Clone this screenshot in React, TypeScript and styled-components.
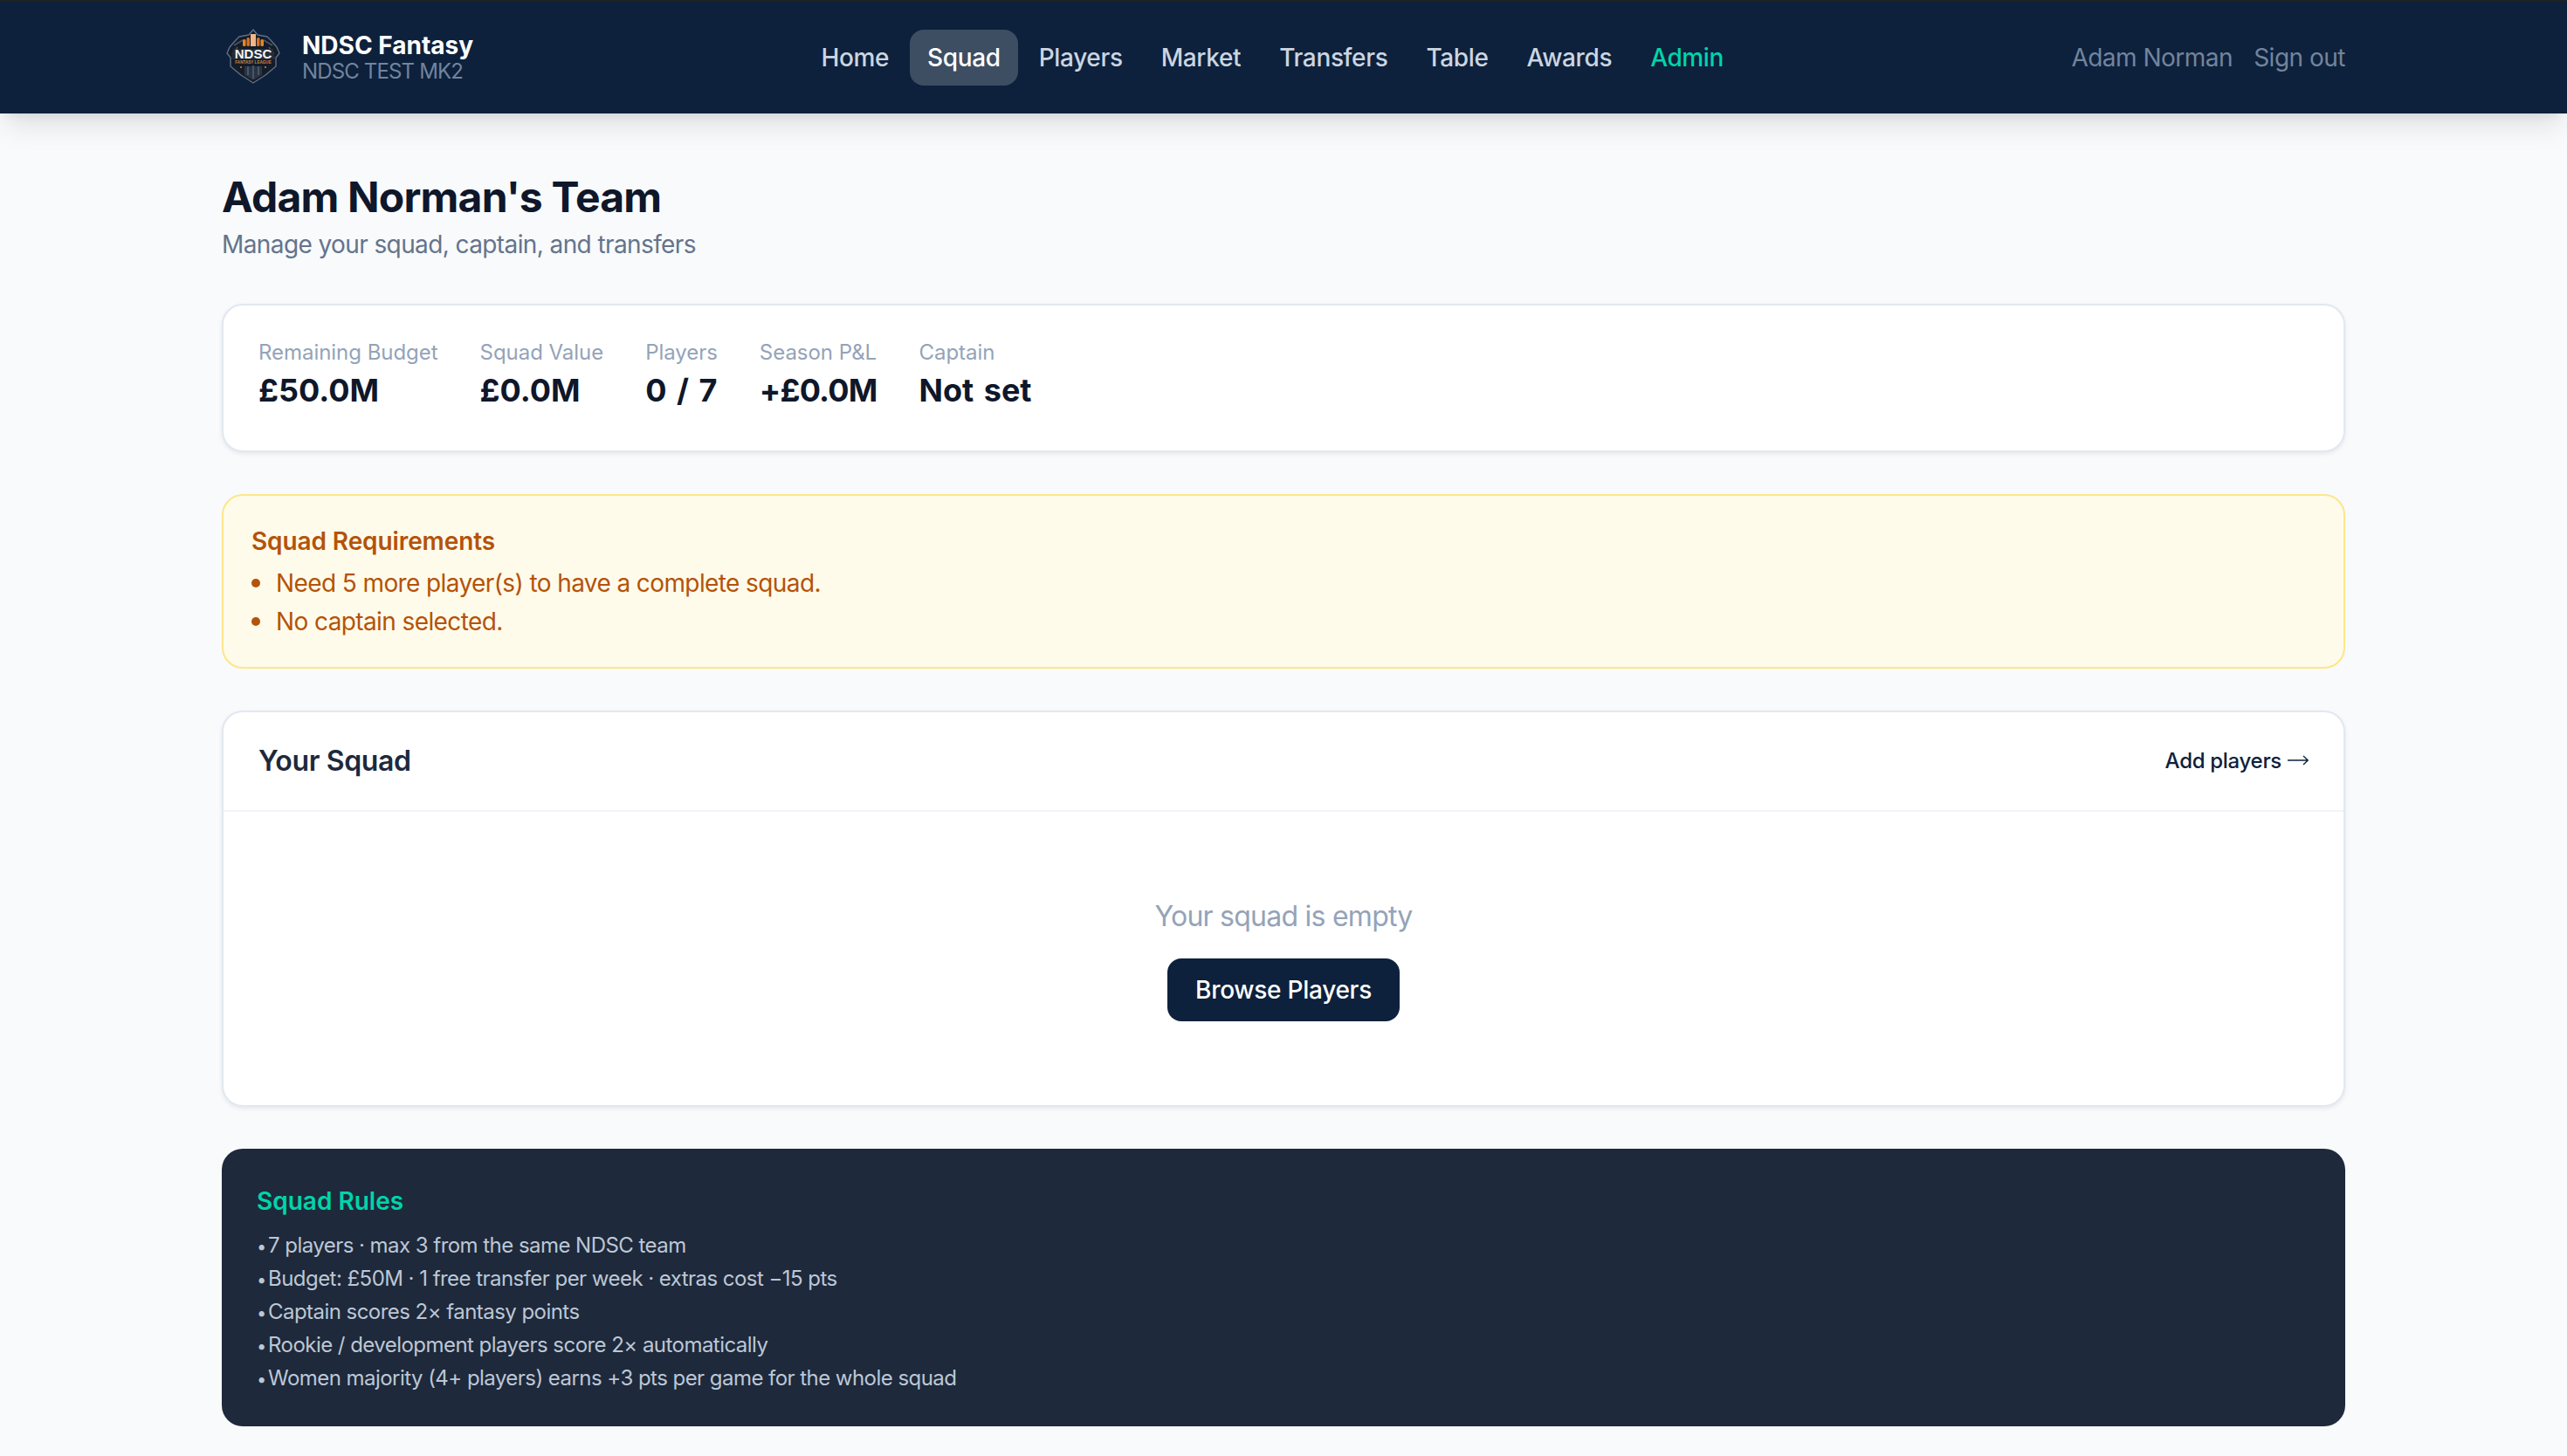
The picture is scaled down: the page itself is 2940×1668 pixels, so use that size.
import React from 'react';
import styled, { createGlobalStyle } from 'styled-components';

const GlobalStyle = createGlobalStyle`
  html, body {
    margin: 0;
    padding: 0;
    background: #f8fafc;
    font-family: Inter, "Noto Sans", sans-serif;
    -webkit-font-smoothing: antialiased;
  }
  * { box-sizing: border-box; }
`;

const Nav = styled.header`
  height: 130px;
  border-top: 2px solid #1e2124;
  background: #0d213c;
  box-shadow: 0 20px 30px -6px rgba(0, 0, 0, 0.1), 0 8px 12px -8px rgba(0, 0, 0, 0.1);
`;

const NavInner = styled.div`
  width: 2432px;
  height: 100%;
  margin: 0 auto;
  display: flex;
  align-items: center;
  justify-content: space-between;
`;

const Brand = styled.div`
  display: flex;
  align-items: center;
  gap: 20px;
`;

const BrandText = styled.div`
  display: flex;
  flex-direction: column;
`;

const BrandName = styled.span`
  font-size: 28px;
  line-height: 32px;
  font-weight: 700;
  color: #ffffff;
`;

const BrandSub = styled.span`
  font-size: 24px;
  line-height: 28px;
  letter-spacing: -0.85px;
  color: #73849c;
`;

const Links = styled.nav`
  display: flex;
  align-items: center;
  gap: 4px;
`;

const NavLink = styled.a<{ $active?: boolean; $admin?: boolean }>`
  height: 64px;
  padding: 0 20px;
  display: flex;
  align-items: center;
  border-radius: 16px;
  font-size: 28px;
  font-weight: 500;
  letter-spacing: -0.36px;
  color: ${p => (p.$admin ? '#00d4aa' : p.$active ? '#ffffff' : '#cbd5e1')};
  background: ${p => (p.$active ? '#3d4e63' : 'transparent')};
`;

const User = styled.div`
  display: flex;
  align-items: center;
  gap: 24px;
  font-size: 28px;
  letter-spacing: -0.5px;
  color: #73849c;
`;

const Main = styled.main`
  width: 2432px;
  margin: 0 auto;
  padding: 64px 0 34px;
  display: flex;
  flex-direction: column;
`;

const Title = styled.h1`
  margin: 0;
  font-size: 48px;
  line-height: 64px;
  font-weight: 700;
  letter-spacing: -0.8px;
  color: #0f172a;
`;

const Subtitle = styled.p`
  margin: 2px 0 48px;
  font-size: 28px;
  line-height: 40px;
  letter-spacing: -0.6px;
  color: #64748b;
`;

const Card = styled.section`
  background: #ffffff;
  border: 2px solid #e2e8f0;
  border-radius: 24px;
  box-shadow: 0 2px 5px rgba(15, 23, 42, 0.08);
  margin-bottom: 48px;
`;

const StatsRow = styled.div`
  display: flex;
  gap: 48px;
  padding: 38px 40px 42px;
`;

const Stat = styled.div`
  display: flex;
  flex-direction: column;
`;

const StatLabel = styled.span`
  font-size: 24px;
  line-height: 32px;
  letter-spacing: -0.04px;
  color: #94a3b8;
`;

const StatValue = styled.span<{ $tight?: boolean }>`
  font-size: 36px;
  line-height: 54px;
  font-weight: 700;
  word-spacing: 3px;
  letter-spacing: ${p => (p.$tight ? '-0.8px' : '0')};
  color: #0f172a;
`;

const Alert = styled.section`
  padding: 32px;
  margin-bottom: 48px;
  background: #fffbeb;
  border: 2px solid #fde68a;
  border-radius: 24px;
  color: #b45309;
`;

const AlertTitle = styled.h2`
  margin: 0 0 8px;
  font-size: 28px;
  line-height: 40px;
  font-weight: 600;
  letter-spacing: -0.1px;
`;

const AlertList = styled.ul`
  margin: 0;
  padding: 0;
  list-style: none;
  display: flex;
  flex-direction: column;
  gap: 4px;
  font-size: 28px;
  line-height: 40px;
  letter-spacing: -0.6px;
`;

const AlertItem = styled.li`
  display: flex;
  align-items: center;
  gap: 18px;

  &::before {
    content: '';
    width: 10px;
    height: 10px;
    border-radius: 50%;
    background: #b45309;
  }
`;

const CardHeader = styled.div`
  height: 114px;
  padding: 0 40px 2px;
  display: flex;
  align-items: center;
  justify-content: space-between;
  border-bottom: 2px solid #f1f5f9;
`;

const CardTitle = styled.h2`
  margin: 0;
  font-size: 32px;
  font-weight: 600;
  letter-spacing: -0.35px;
  color: #1e293b;
`;

const AddLink = styled.a`
  display: flex;
  align-items: center;
  gap: 7px;
  font-size: 24px;
  font-weight: 500;
  letter-spacing: -0.3px;
  color: #0d213c;
`;

const Empty = styled.div`
  padding: 96px 0;
  display: flex;
  flex-direction: column;
  align-items: center;
  gap: 24px;
`;

const EmptyText = styled.p`
  margin: 0;
  font-size: 32px;
  line-height: 48px;
  letter-spacing: -0.75px;
  color: #94a3b8;
`;

const Browse = styled.button`
  width: 266px;
  height: 72px;
  border: 0;
  border-radius: 16px;
  background: #0d213c;
  color: #ffffff;
  font-family: inherit;
  font-size: 28px;
  font-weight: 500;
  letter-spacing: -0.27px;
`;

const Rules = styled.section`
  padding: 36px 40px;
  background: #1e293b;
  border-radius: 24px;
`;

const RulesTitle = styled.h2`
  margin: 0 0 8px;
  font-size: 28px;
  line-height: 48px;
  font-weight: 600;
  color: #00d4aa;
`;

const RuleLine = styled.p`
  margin: 0;
  height: 38px;
  font-size: 24px;
  line-height: 38px;
  letter-spacing: -0.54px;
  color: #bcc7d6;
`;

const RuleDot = styled.span`
  display: inline-block;
  width: 13px;
  font-size: 20px;
  line-height: 1;
`;

// logo is only 60px wide on screen, so this is just the rough shapes of the crest
const Logo = () => (
  <svg width="72" height="72" viewBox="0 0 72 72">
    <path
      d="M36 4 L41 10 L52 12 L56 16 L63 24 L66 31 L62 36 L62 46 L50 56 L36 65 L22 56 L10 46 L10 36 L6 31 L9 24 L16 16 L20 12 L31 10 Z"
      fill="#141c28"
      stroke="#5f6f85"
      strokeWidth="1.4"
      strokeLinejoin="round"
    />
    <path d="M14 22 L24 16 M58 22 L48 16 M12 32 L18 24 M60 32 L54 24" stroke="#46566c" strokeWidth="1.5" />
    <rect x="24" y="15" width="3.5" height="8" rx="1.5" fill="#e8862a" />
    <rect x="28.5" y="13" width="3.5" height="10" rx="1.5" fill="#d9701e" />
    <rect x="33" y="9" width="6" height="14" fill="#f0b78a" />
    <rect x="40" y="13" width="3.5" height="10" rx="1.5" fill="#d9701e" />
    <rect x="44.5" y="15" width="3.5" height="8" rx="1.5" fill="#e8862a" />
    <path d="M13 26 H59 L61 38 H11 Z" fill="#232c3a" />
    <text
      x="36"
      y="36.5"
      textAnchor="middle"
      fontFamily="'Liberation Sans', sans-serif"
      fontSize="15"
      fontWeight="700"
      fill="#f4f6f8"
    >
      NDSC
    </text>
    <text
      x="36"
      y="42.5"
      textAnchor="middle"
      fontFamily="'Liberation Sans', sans-serif"
      fontSize="4.6"
      fontWeight="700"
      fill="#c88a4c"
    >
      FANTASY LEAGUE
    </text>
    <path d="M26 46 H46 V56 L36 62 L26 56 Z" fill="#2a3442" />
    <path d="M30 46 V56 M36 45 V60 M42 46 V56" stroke="#54647a" strokeWidth="1.4" />
    <circle cx="22" cy="47" r="1" fill="#e8862a" />
    <circle cx="50" cy="47" r="1" fill="#e8862a" />
  </svg>
);

const ArrowIcon = () => (
  <svg width="24" height="12" viewBox="0 0 24 12" fill="none">
    <path d="M0 6 H23 M18 1 L23.2 6 L18 11" stroke="#0d213c" strokeWidth="1.3" />
  </svg>
);

const links = ['Home', 'Squad', 'Players', 'Market', 'Transfers', 'Table', 'Awards', 'Admin'];

const stats = [
  { label: 'Remaining Budget', value: '£50.0M' },
  { label: 'Squad Value', value: '£0.0M' },
  { label: 'Players', value: '0 / 7' },
  { label: 'Season P&L', value: '+£0.0M', tight: true },
  { label: 'Captain', value: 'Not set' }
];

const rules = [
  '7 players · max 3 from the same NDSC team',
  'Budget: £50M · 1 free transfer per week · extras cost −15 pts',
  'Captain scores 2× fantasy points',
  'Rookie / development players score 2× automatically',
  'Women majority (4+ players) earns +3 pts per game for the whole squad'
];

export default function App() {
  return (
    <>
      <GlobalStyle />
      <Nav>
        <NavInner>
          <Brand>
            <Logo />
            <BrandText>
              <BrandName>NDSC Fantasy</BrandName>
              <BrandSub>NDSC TEST MK2</BrandSub>
            </BrandText>
          </Brand>
          <Links>
            {links.map(link => (
              <NavLink key={link} $active={link === 'Squad'} $admin={link === 'Admin'}>
                {link}
              </NavLink>
            ))}
          </Links>
          <User>
            <span>Adam Norman</span>
            <span>Sign out</span>
          </User>
        </NavInner>
      </Nav>
      <Main>
        <Title>Adam Norman's Team</Title>
        <Subtitle>Manage your squad, captain, and transfers</Subtitle>
        <Card>
          <StatsRow>
            {stats.map(stat => (
              <Stat key={stat.label}>
                <StatLabel>{stat.label}</StatLabel>
                <StatValue $tight={stat.tight}>{stat.value}</StatValue>
              </Stat>
            ))}
          </StatsRow>
        </Card>
        <Alert>
          <AlertTitle>Squad Requirements</AlertTitle>
          <AlertList>
            <AlertItem>Need 5 more player(s) to have a complete squad.</AlertItem>
            <AlertItem>No captain selected.</AlertItem>
          </AlertList>
        </Alert>
        <Card>
          <CardHeader>
            <CardTitle>Your Squad</CardTitle>
            <AddLink>
              Add players
              <ArrowIcon />
            </AddLink>
          </CardHeader>
          <Empty>
            <EmptyText>Your squad is empty</EmptyText>
            <Browse>Browse Players</Browse>
          </Empty>
        </Card>
        <Rules>
          <RulesTitle>Squad Rules</RulesTitle>
          {rules.map(rule => (
            <RuleLine key={rule}>
              <RuleDot>•</RuleDot>
              {rule}
            </RuleLine>
          ))}
        </Rules>
      </Main>
    </>
  );
}
